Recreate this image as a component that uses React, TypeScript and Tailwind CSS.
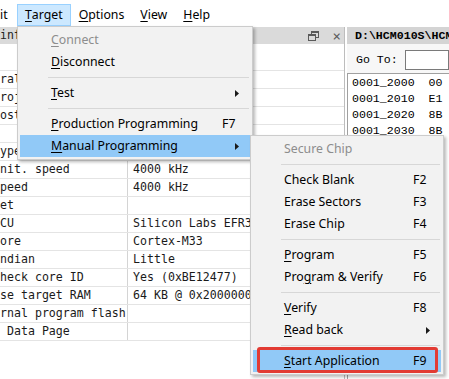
import type { ReactNode } from "react";

type MenuEntry =
  | { sep: true }
  | {
      label: string;
      u?: number;
      shortcut?: string;
      arrow?: boolean;
      disabled?: boolean;
      active?: boolean;
      marked?: boolean;
    };

const targetMenu: MenuEntry[] = [
  { label: "Connect", u: 0, disabled: true },
  { label: "Disconnect", u: 0 },
  { sep: true },
  { label: "Test", u: 0, arrow: true },
  { sep: true },
  { label: "Production Programming", u: 0, shortcut: "F7" },
  { label: "Manual Programming", u: 0, arrow: true, active: true },
];

const manualMenu: MenuEntry[] = [
  { label: "Secure Chip", disabled: true },
  { sep: true },
  { label: "Check Blank", shortcut: "F2" },
  { label: "Erase Sectors", shortcut: "F3" },
  { label: "Erase Chip", shortcut: "F4" },
  { sep: true },
  { label: "Program", u: 0, shortcut: "F5" },
  { label: "Program & Verify", u: 3, shortcut: "F6" },
  { sep: true },
  { label: "Verify", u: 0, shortcut: "F8" },
  { label: "Read back", u: 0, arrow: true },
  { sep: true },
  { label: "Start Application", u: 0, shortcut: "F9", active: true, marked: true },
];

const infoRows: [string, string][] = [
  ["", ""],
  ["ral", ""],
  ["roj", ""],
  ["ost", ""],
  ["", ""],
  ["ype", ""],
  ["nit. speed", "4000 kHz"],
  ["peed", "4000 kHz"],
  ["et", ""],
  ["CU", "Silicon Labs EFR32MG21A010F1024"],
  ["ore", "Cortex-M33"],
  ["ndian", "Little"],
  ["heck core ID", "Yes (0xBE12477)"],
  ["se target RAM", "64 KB @ 0x20000000"],
  ["rnal program flash", ""],
  [" Data Page", ""],
];

const hexBytes = ["00", "E1", "8B", "8B", "00", "F0", "2D", "48", "01", "4B", "C0", "FF", "70", "47", "08", "B5", "20", "3C", "9A", "11"];

function Label({ text, u }: { text: string; u?: number }) {
  if (u === undefined) return <>{text}</>;
  return (
    <>
      {text.slice(0, u)}
      <span className="underline decoration-1 underline-offset-[2px]">{text[u]}</span>
      {text.slice(u + 1)}
    </>
  );
}

function Arrow() {
  return (
    <svg width="4" height="7" viewBox="0 0 4 7" className="ml-[13px]">
      <path d="M0 0 L4 3.5 L0 7 Z" fill="#1a1a1a" />
    </svg>
  );
}

function Menu({ items, className }: { items: MenuEntry[]; className: string }) {
  return (
    <div
      className={`absolute border border-[#cccccc] bg-[#f2f2f2] p-[2px] text-[12.3px] text-black shadow-[2px_2px_3px_rgba(0,0,0,0.28)] ${className}`}
    >
      {items.map((item, i) => {
        if ("sep" in item) {
          return (
            <div key={i} className="flex h-[9px] items-center">
              <div className="ml-[28px] mr-[1px] h-px flex-1 bg-[#d7d7d7]" />
            </div>
          );
        }
        return (
          <div
            key={i}
            className={`relative flex h-[22px] items-center pl-[31px] ${
              item.active ? "bg-[#91c9f7]" : ""
            } ${item.disabled ? "text-[#8d8d8d]" : ""}`}
          >
            <span className="flex-1 whitespace-nowrap">
              <Label text={item.label} u={item.u} />
            </span>
            <span className="flex w-[28px] items-center">
              {item.shortcut}
              {item.arrow && <Arrow />}
            </span>
            {item.marked && (
              <div className="absolute -top-[3px] bottom-[-1px] left-[4px] right-[3px] rounded-[3px] border-[3px] border-[#e23b33]" />
            )}
          </div>
        );
      })}
    </div>
  );
}

function RestoreIcon() {
  return (
    <svg width="11" height="10" viewBox="0 0 11 10" fill="none" stroke="#5a5a5a">
      <rect x="3.5" y="0.5" width="7" height="6" />
      <rect x="0.5" y="3.5" width="7" height="6" fill="#dadada" />
      <path d="M3.5 1.5h7M0.5 4.5h7" />
    </svg>
  );
}

function MenuBarItem({ children, active }: { children: ReactNode; active?: boolean }) {
  return (
    <div
      className={`flex h-[22px] items-center border px-[7px] ${
        active ? "border-[#99d1ff] bg-[#cce8ff]" : "border-transparent"
      }`}
    >
      {children}
    </div>
  );
}

export default function App() {
  return (
    <div className="relative h-[379px] w-[449px] overflow-hidden bg-white font-['Noto_Sans',sans-serif] text-black">
      {/* menu bar */}
      <div className="flex h-[27px] items-start pt-[4px] text-[12.3px]">
        <div className="flex h-[22px] w-[17px] items-center">it</div>
        <MenuBarItem active>
          <Label text="Target" u={0} />
        </MenuBarItem>
        <MenuBarItem>
          <Label text="Options" u={0} />
        </MenuBarItem>
        <MenuBarItem>
          <Label text="View" u={0} />
        </MenuBarItem>
        <MenuBarItem>
          <Label text="Help" u={0} />
        </MenuBarItem>
      </div>

      <div className="flex">
        {/* project information panel */}
        <div className="w-[345px] shrink-0 border-r border-[#bdbdbd]">
          <div className="flex h-[17px] items-center bg-[#dadada] font-['DejaVu_Sans_Mono',monospace] text-[11.5px] text-[#222]">
            <span className="flex-1">inf</span>
            <RestoreIcon />
            <span className="ml-[14px] mr-[3px] text-[14px] leading-none text-[#5a5a5a]">×</span>
          </div>
          <div className="font-['DejaVu_Sans_Mono',monospace] text-[11.6px] text-[#1a1a1a]">
            {infoRows.map(([name, value], i) => (
              <div
                key={i}
                className={`flex border-b border-[#e4e4e4] ${i === 0 ? "h-[27px]" : "h-[18px]"}`}
              >
                <div className="flex w-[128px] shrink-0 items-center overflow-hidden whitespace-pre border-r border-[#d4d4d4]">
                  {name}
                </div>
                <div className="flex flex-1 items-center overflow-hidden whitespace-nowrap pl-[5px]">
                  {value}
                </div>
              </div>
            ))}
          </div>
        </div>

        {/* data view panel */}
        <div className="ml-[2px] min-w-0 flex-1 font-['Liberation_Mono',monospace] text-[11.6px]">
          <div className="flex h-[17px] items-center whitespace-nowrap bg-[#d4d4d4] pl-[8px] font-bold">
            D:\HCM010S\HCM010S.hex
          </div>
          <div className="flex h-[29px] items-center bg-[#f7f7f7] pl-[9px] pt-[2px]">
            <span className="w-[49px] shrink-0">Go To:</span>
            <div className="h-[20px] flex-1 border border-[#7a7a7a] bg-white" />
          </div>
          <div className="border-l border-t border-[#a0a0a0] pl-[4px] pt-[1px]">
            {hexBytes.map((b, i) => (
              <div key={i} className="flex h-[16px] items-center whitespace-pre">
                {`0001_${(0x2000 + i * 16).toString(16).toUpperCase()}  ${b} ${hexBytes[(i + 3) % hexBytes.length]}`}
              </div>
            ))}
          </div>
        </div>
      </div>

      {/* Target drop-down and Manual Programming sub menu */}
      <Menu items={targetMenu} className="left-[17px] top-[26px] w-[236px]" />
      <Menu items={manualMenu} className="left-[250px] top-[135px] w-[194px]" />
    </div>
  );
}
